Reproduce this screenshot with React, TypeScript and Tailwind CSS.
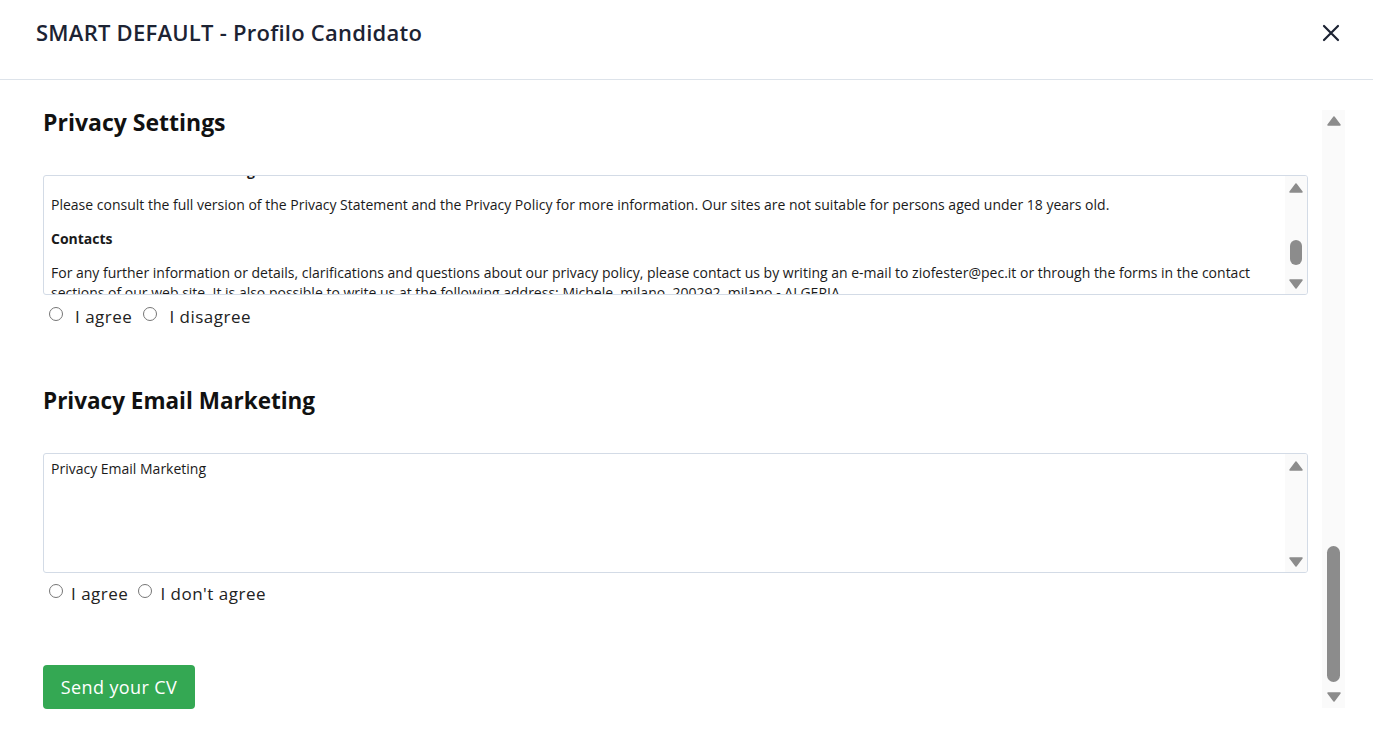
import type { ReactNode } from "react";

const font = { fontFamily: "'Open Sans', 'Liberation Sans', sans-serif" };

function ArrowUp() {
  return (
    <svg width="14" height="10" viewBox="0 0 14 10" className="block">
      <path d="M7 1 L13 9 L1 9 Z" fill="#8c8c8c" stroke="#8c8c8c" strokeLinejoin="round" strokeWidth="1.5" />
    </svg>
  );
}

function ArrowDown() {
  return (
    <svg width="14" height="10" viewBox="0 0 14 10" className="block">
      <path d="M1 1 L13 1 L7 9 Z" fill="#8c8c8c" stroke="#8c8c8c" strokeLinejoin="round" strokeWidth="1.5" />
    </svg>
  );
}

function ScrollBox({ children, thumb, offset }: { children: ReactNode; thumb?: boolean; offset: string }) {
  return (
    <div className="h-[120px] border border-[#d3dbe6] rounded-[3px] flex overflow-hidden">
      <div className="flex-1 overflow-hidden px-[7px]">
        <div className={offset}>{children}</div>
      </div>
      <div className="w-[22px] bg-[#fafafa] flex flex-col items-center pt-[7px] pb-[5px]">
        <ArrowUp />
        {thumb && <div className="w-[12px] h-[25px] rounded-full bg-[#8c8c8c] mt-[47px]" />}
        <div className="flex-1" />
        <ArrowDown />
      </div>
    </div>
  );
}

function Radio({ label, gap }: { label: string; gap: string }) {
  return (
    <label className={`flex items-center ${gap}`}>
      <span className="w-[14px] h-[14px] rounded-full border border-[#767676] bg-white -mt-[5px]" />
      <span>{label}</span>
    </label>
  );
}

export default function App() {
  return (
    <div className="w-[1373px] h-[733px] bg-white text-[#111] overflow-hidden" style={font}>
      <header className="h-[80px] border-b border-[#dde3ea] flex items-center justify-between pl-[36px] pr-[33px] pb-[14px]">
        <h1 className="text-[22px] font-semibold text-[#1c2333] tracking-[0.25px]">SMART DEFAULT - Profilo Candidato</h1>
        <svg width="18" height="18" viewBox="0 0 18 18">
          <path d="M2 2 L16 16 M16 2 L2 16" stroke="#1c2333" strokeWidth="2.2" strokeLinecap="round" />
        </svg>
      </header>

      <div className="flex pl-[43px] pr-[28px]">
        <main className="flex-1 pr-[14px]">
          <h2 className="text-[23px] font-bold mt-[27px] mb-[38px] leading-[30px]">Privacy Settings</h2>
          <ScrollBox thumb offset="-mt-[15px]">
            <div className="text-[14px] leading-[20px] text-[#1a1a1a]">
              <p className="font-bold">Minors' data and its handling</p>
              <p className="mt-[14px]">
                Please consult the full version of the Privacy Statement and the Privacy Policy for more information. Our sites are not suitable for persons aged under 18 years old.
              </p>
              <p className="mt-[14px] font-bold">Contacts</p>
              <p className="mt-[14px]">
                For any further information or details, clarifications and questions about our privacy policy, please contact us by writing an e-mail to ziofester@pec.it or through the forms in the contact sections of our web site. It is also possible to write us at the following address: Michele, milano, 200292, milano - ALGERIA
              </p>
            </div>
          </ScrollBox>
          <div className="flex items-center gap-[11px] mt-[9px] ml-[6px] text-[17px] tracking-[0.5px] text-[#222]">
            <Radio label="I agree" gap="gap-[12px]" />
            <Radio label="I disagree" gap="gap-[12px]" />
          </div>

          <h2 className="text-[22.5px] font-bold mt-[56px] mb-[37px] leading-[30px]">Privacy Email Marketing</h2>
          <ScrollBox offset="pt-[6px]">
            <p className="text-[14px] leading-[18px] text-[#1a1a1a]">Privacy Email Marketing</p>
          </ScrollBox>
          <div className="flex items-center gap-[10px] mt-[8px] ml-[6px] text-[17px] tracking-[0.5px] text-[#222]">
            <Radio label="I agree" gap="gap-[8px]" />
            <Radio label="I don't agree" gap="gap-[8px]" />
          </div>

          <button className="mt-[59px] h-[44px] w-[152px] rounded-[4px] bg-[#34a853] text-white text-[18px] tracking-[0.4px]">
            Send your CV
          </button>
        </main>

        <aside className="w-[23px] mt-[30px] h-[598px] bg-[#fafafa] flex flex-col items-center justify-between py-[6px]">
          <ArrowUp />
          <div className="flex-1 flex flex-col justify-end pb-[10px] pt-[4px]">
            <div className="w-[13px] h-[136px] rounded-full bg-[#8c8c8c]" />
          </div>
          <ArrowDown />
        </aside>
      </div>
    </div>
  );
}
